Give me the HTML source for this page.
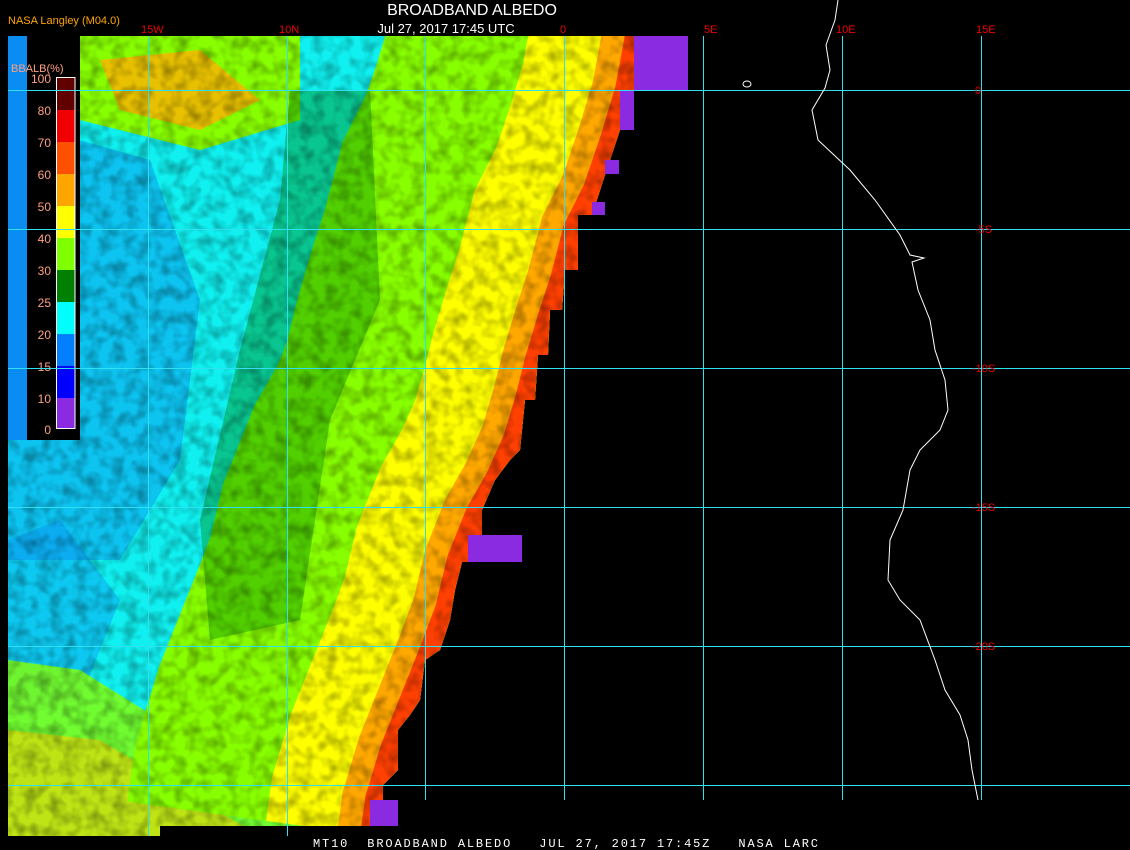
<!DOCTYPE html>
<html><head><meta charset="utf-8"><style>
html,body{margin:0;padding:0;background:#000;width:1130px;height:850px;overflow:hidden}
svg{display:block}
text{font-family:"Liberation Sans",sans-serif}
</style></head><body>
<svg width="1130" height="850" viewBox="0 0 1130 850" xmlns="http://www.w3.org/2000/svg">
<defs>
<clipPath id="reg"><polygon points="80,36 634,36 634,90 634,130 620,130 605,175 592,215 578,215 578,270 565,270 562,310 550,310 548,355 538,355 535,400 525,400 520,450 510,460 495,480 482,510 482,535 468,562 462,562 455,590 450,620 440,650 425,660 420,700 410,715 398,730 398,770 383,785 383,800 370,800 370,826 160,826 160,836 8,836 8,440 80,440"/></clipPath>
<filter id="n" x="0" y="0" width="100%" height="100%"><feTurbulence type="fractalNoise" baseFrequency="0.08" numOctaves="2" seed="3"/><feColorMatrix type="matrix" values="0 0 0 0 0  0 0 0 0 0  0 0 0 0 0  0 0 0 -2.2 1.35"/></filter>
</defs>
<rect width="1130" height="850" fill="#000"/>
<rect x="8" y="36" width="19" height="404" fill="#0a8cf0"/>
<g clip-path="url(#reg)">
<rect x="0" y="0" width="700" height="850" fill="#10f0f0"/>
<polygon points="8,120 150,160 200,300 180,460 120,560 8,560" fill="#0a8cf0" opacity="0.45"/>
<polygon points="8,540 60,520 120,600 80,700 8,720" fill="#0a8cf0" opacity="0.4"/>
<polygon points="80,36 300,36 300,120 200,150 80,120" fill="#88ff00"/>
<polygon points="100,60 200,50 260,100 200,130 120,110" fill="#ffb000" opacity="0.8"/>
<polygon points="8,660 80,670 160,720 220,780 300,790 350,836 8,836" fill="#88ff00" opacity="0.8"/>
<polygon points="8,730 100,740 200,800 260,836 8,836" fill="#ffd000" opacity="0.55"/>
<polyline points="640,36 630,90 615,140 598,190 578,230 565,280 552,320 540,360 530,400 518,440 500,480 480,515 462,560 450,610 435,650 415,700 395,750 380,800 375,836" fill="none" stroke="#88ff00" stroke-width="500"/>
<polygon points="290,90 370,90 380,300 330,420 300,620 210,640 200,520 240,350 280,200" fill="#008800" opacity="0.4"/>
<polyline points="640,36 630,90 615,140 598,190 578,230 565,280 552,320 540,360 530,400 518,440 500,480 480,515 462,560 450,610 435,650 415,700 395,750 380,800 375,836" fill="none" stroke="#ffff00" stroke-width="220"/>
<polyline points="640,36 630,90 615,140 598,190 578,230 565,280 552,320 540,360 530,400 518,440 500,480 480,515 462,560 450,610 435,650 415,700 395,750 380,800 375,836" fill="none" stroke="#ffa800" stroke-width="76"/>
<polyline points="640,36 630,90 615,140 598,190 578,230 565,280 552,320 540,360 530,400 518,440 500,480 480,515 462,560 450,610 435,650 415,700 395,750 380,800 375,836" fill="none" stroke="#ff4000" stroke-width="30"/>
<rect x="0" y="0" width="700" height="850" fill="#008800" filter="url(#n)" opacity="0.3"/>
</g>
<rect x="634" y="36" width="54" height="54" fill="#8a2be2"/>
<rect x="620" y="90" width="14" height="40" fill="#8a2be2"/>
<rect x="605" y="160" width="14" height="14" fill="#8a2be2"/>
<rect x="592" y="202" width="13" height="13" fill="#8a2be2"/>
<rect x="468" y="535" width="54" height="27" fill="#8a2be2"/>
<rect x="370" y="800" width="28" height="26" fill="#8a2be2"/>
<rect x="27" y="36" width="53" height="404" fill="#000"/>
<g>
<rect x="56" y="77" width="19" height="33" fill="#600000"/>
<rect x="56" y="110" width="19" height="32" fill="#f00000"/>
<rect x="56" y="142" width="19" height="32" fill="#ff5000"/>
<rect x="56" y="174" width="19" height="32" fill="#ffa500"/>
<rect x="56" y="206" width="19" height="32" fill="#ffff00"/>
<rect x="56" y="238" width="19" height="32" fill="#80ff00"/>
<rect x="56" y="270" width="19" height="32" fill="#008000"/>
<rect x="56" y="302" width="19" height="32" fill="#00ffff"/>
<rect x="56" y="334" width="19" height="32" fill="#0080ff"/>
<rect x="56" y="366" width="19" height="32" fill="#0000ff"/>
<rect x="56" y="398" width="19" height="30" fill="#8a2be2"/>
<rect x="56.5" y="77.5" width="18.5" height="351" fill="none" stroke="#fff" stroke-width="1"/>
</g>
<g fill="#ffa080" font-size="12" text-anchor="end">
<text x="51" y="83">100</text><text x="51" y="115">80</text><text x="51" y="147">70</text><text x="51" y="179">60</text><text x="51" y="211">50</text><text x="51" y="243">40</text><text x="51" y="275">30</text><text x="51" y="307">25</text><text x="51" y="339">20</text><text x="51" y="371">15</text><text x="51" y="403">10</text><text x="51" y="434">0</text>
</g>
<text x="11" y="72" fill="#ffa080" font-size="11">BBALB(%)</text>
<g stroke="#30e0f0" stroke-width="1">
<line x1="8" y1="90.5" x2="1130" y2="90.5"/><line x1="8" y1="229.5" x2="1130" y2="229.5"/><line x1="8" y1="368.5" x2="1130" y2="368.5"/><line x1="8" y1="507.5" x2="1130" y2="507.5"/><line x1="8" y1="646.5" x2="1130" y2="646.5"/><line x1="8" y1="785.5" x2="1130" y2="785.5"/>
<line x1="148.5" y1="36" x2="148.5" y2="836"/><line x1="287.5" y1="36" x2="287.5" y2="836"/><line x1="425.5" y1="36" x2="425.5" y2="800"/><line x1="564.5" y1="36" x2="564.5" y2="800"/><line x1="703.5" y1="36" x2="703.5" y2="800"/><line x1="842.5" y1="36" x2="842.5" y2="800"/><line x1="981.5" y1="36" x2="981.5" y2="800"/>
</g>
<g fill="#f00000" font-size="11">
<text x="141" y="33">15W</text><text x="279" y="33">10N</text><text x="560" y="33">0</text><text x="704" y="33">5E</text><text x="836" y="33">10E</text><text x="976" y="33">15E</text>
<text x="975" y="94">0</text><text x="975" y="233">-5S</text><text x="972" y="372">-10S</text><text x="972" y="511">-15S</text><text x="972" y="650">-20S</text>
</g>
<polyline points="838,0 835,20 826,45 830,70 825,88 812,110 818,140 850,170 875,200 900,235 910,255 924,258 912,262 918,290 930,320 935,350 945,380 948,410 940,430 920,450 910,470 903,510 890,540 888,580 900,600 920,620 935,660 945,690 960,715 968,740 972,770 978,800" fill="none" stroke="#fff" stroke-width="1"/>
<ellipse cx="747" cy="84" rx="4" ry="3" fill="none" stroke="#fff" stroke-width="1"/>
<text x="8" y="24" fill="#ffa500" font-size="11">NASA Langley (M04.0)</text>
<text x="472" y="15" fill="#fff" font-size="16" text-anchor="middle">BROADBAND ALBEDO</text>
<text x="446" y="33" fill="#fff" font-size="13" text-anchor="middle">Jul 27, 2017 17:45 UTC</text>
<text x="313" y="847" fill="#fff" font-size="12" style="font-family:'Liberation Mono',monospace;white-space:pre" xml:space="preserve" textLength="505" lengthAdjust="spacing">MT10  BROADBAND ALBEDO   JUL 27, 2017 17:45Z   NASA LARC</text>
</svg>
</body></html>
